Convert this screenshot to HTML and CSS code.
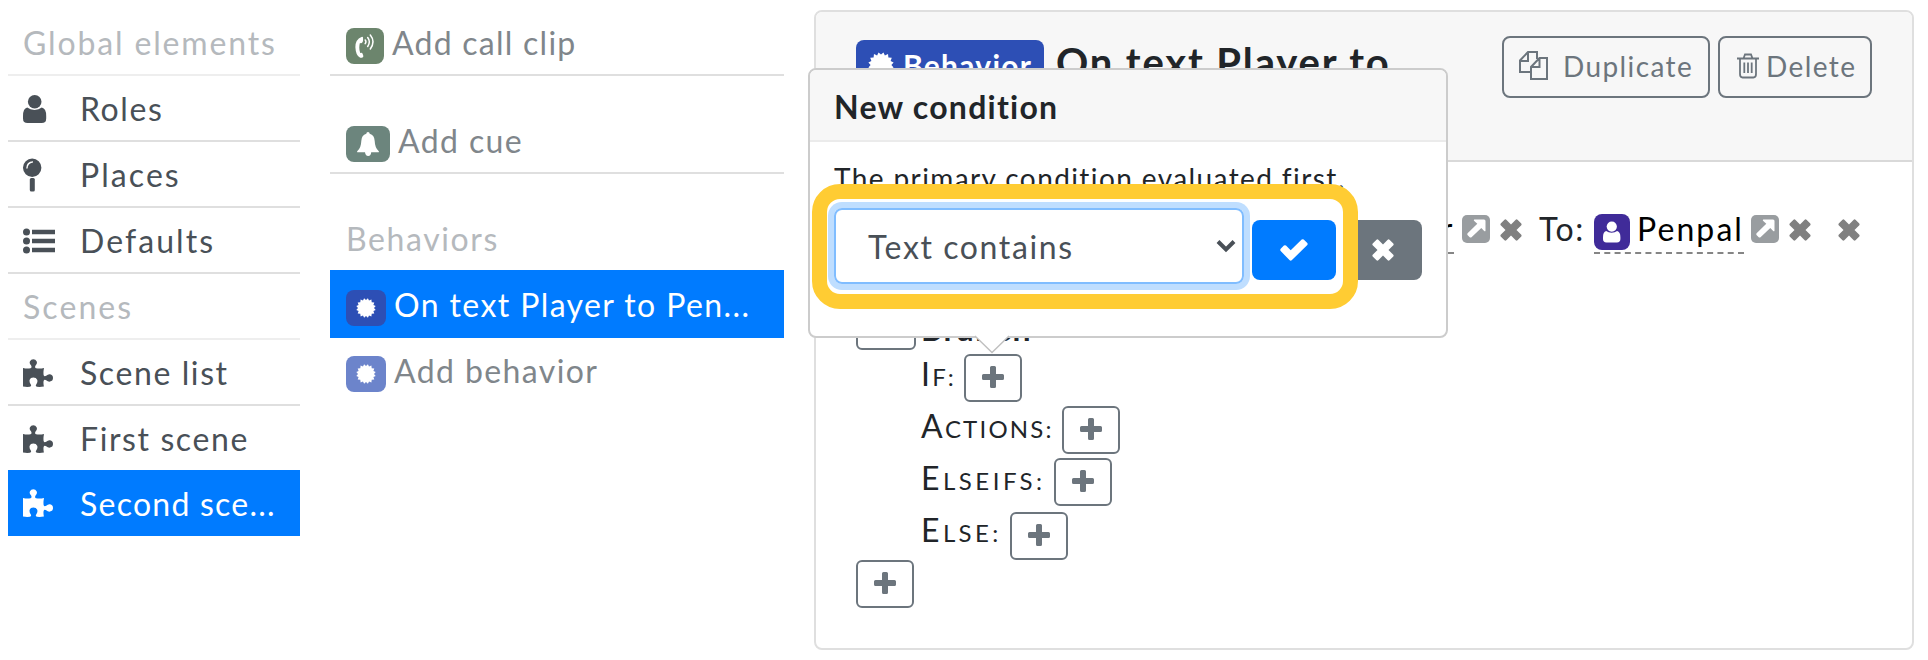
FILE: index.html
```html
<!DOCTYPE html>
<html lang="en">
<head>
<meta charset="utf-8">
<title>Scene editor</title>
<link rel="stylesheet" href="styles.css">
</head>
<body>
<svg class="defs" width="0" height="0" aria-hidden="true">
  <symbol id="user" viewBox="0 0 24 28"><circle cx="11.7" cy="6.8" r="6.8"/><path d="M4.2 12.6Q0 13.6 0 21v2.4Q0 28 4.6 28h14Q23.2 28 23.2 23.4V21q0-7.4-4.4-8.4-3 2.4-7.3 2.4t-7.3-2.4z"/></symbol>
  <symbol id="pin" viewBox="0 0 20 34"><path fill-rule="evenodd" d="M9.2.5a9.2 9.2 0 1 1 0 18.400a9.2 9.2 0 1 1 0-18.400zM3.200 10.400h1.400Q4.600 5.200 10 4.400V3.200Q3.200 3.600 3.200 10.400z"/><rect x="6.800" y="20" width="5" height="13.500" rx="1.500"/></symbol>
  <symbol id="list" viewBox="0 0 32 26"><circle cx="3.500" cy="4" r="3.500"/><circle cx="3.500" cy="13" r="3.500"/><circle cx="3.500" cy="22" r="3.500"/><path d="M9 1.800h23v4.400H9zM9 10.800h23v4.400H9zM9 19.800h23v4.400H9z"/></symbol>
  <symbol id="puzzle" viewBox="0 0 30 28"><path d="M0 9q4 1 7.500 .3Q9.300 8.600 8 6.200 6 4.500 7 2.300 8 .2 10.300 .2T13.600 2.300Q14.600 4.500 12.700 6.200 11.300 8.600 13 9.200q4 .8 8-.3-.8 4-.4 7 .6 2.200 2.600.9Q25 15 27 15.300q3 .6 3 3.800 0 3-3 3.500-2 .3-3.800-1.400-2-1.200-2.600.8-.4 2.400.3 5.600-4 .6-6.900.2-2-.6-.8-2.400Q15 23 14.200 20.800 13.300 18.600 10.300 18.500 7.400 18.600 6.700 20.800 6 23 7.800 25.400q1 1.800-1 2.400-3 .4-6.800-.2z"/></symbol>
  <symbol id="burst" viewBox="0 0 20 20"><path d="M10 2 11.900.3 13 2.600 15.400 1.600 15.700 4.200 18.300 4.500 17.400 6.900 19.700 8.100 18 10 19.700 11.900 17.400 13.100 18.300 15.500 15.700 15.800 15.400 18.400 13 17.400 11.900 19.700 10 18 8.100 19.700 7 17.400 4.600 18.400 4.300 15.800 1.700 15.500 2.600 13.100.3 11.900 2 10 .3 8.100 2.600 6.900 1.700 4.500 4.300 4.200 4.600 1.600 7 2.600 8.100.3z"/></symbol>
  <symbol id="call" viewBox="0 0 20 24"><path d="M8 3.300Q7.800 2.500 6.500 3 .2 5.500.4 13.500.8 22 5.200 23.700q1.500.4 2.600-.4.800-.7.400-1.800L7.500 19.400Q7 18.500 5.200 19 3.500 14 4.900 9q1.800.4 2.400-.4.700-1 .8-2.600z"/><g fill="none" stroke="currentColor" stroke-width="1.500" stroke-linecap="round"><path d="M10.200 6q1.400 1.600 0 3.600M12.700 3.500q3.300 4.200 0 9M15.300 1q5.400 6.600 0 14"/></g></symbol>
  <symbol id="bell" viewBox="0 0 22 24"><path d="M11 0q1.600 0 1.700 1.700Q17.500 3 17.700 9q.2 7 4.100 10.200.4.900-.5 1.100H14.200Q14 24 11.200 24T8 20.300H.7Q-.2 20.100.2 19.200 4.100 16 4.300 9 4.500 3 9.300 1.700 9.400 0 11 0z"/></symbol>
  <symbol id="plus" viewBox="0 0 22 22"><path d="M9.500 0h3Q14 0 14 1.500V8h6.500Q22 8 22 9.500v3Q22 14 20.500 14H14v6.500Q14 22 12.500 22h-3Q8 22 8 20.500V14H1.500Q0 14 0 12.500v-3Q0 8 1.500 8H8V1.500Q8 0 9.500 0z"/></symbol>
  <symbol id="times" viewBox="0 0 22 22"><path d="M4.500.700Q5.400 0 6.300.700L11 5.500 15.700.700Q16.600 0 17.500.700L21.300 4.500Q22 5.400 21.300 6.300L16.500 11 21.300 15.700Q22 16.600 21.300 17.500L17.500 21.300Q16.600 22 15.700 21.300L11 16.500 6.300 21.300Q5.400 22 4.500 21.300L.700 17.500Q0 16.600.700 15.700L5.500 11 .700 6.300Q0 5.400.700 4.500z"/></symbol>
  <symbol id="check" viewBox="0 0 28 22"><path d="M.700 9.800 3.900 6.600Q5 5.800 6 6.600L10.700 11.300 21.700.600Q22.700-.300 23.700.600L27.300 4.100Q28 5 27.300 6L11.700 21.300Q10.700 22 9.700 21.300L.700 12.100Q-.200 11 .700 9.800z"/></symbol>
  <symbol id="link" viewBox="0 0 28 28"><rect width="28" height="28" rx="5" fill="#999da0"/><path fill="#fff" d="M12.300 4.500H22Q23.500 4.500 23.500 6v9.700q-.3 1-1.300.3L19.300 13 9.500 22.300q-1 .6-1.800-.1L5.500 19.900q-.6-.8.100-1.700L15.300 8.700 12 5.800q-.6-1 .3-1.300z"/></symbol>
  <symbol id="copy" viewBox="0 0 30 30"><g fill="none" stroke="currentColor" stroke-width="2"><path d="M12 21H1V9.500L9 1h9v7M1 10h8V1M12 16v12h16V7H20.500zM12 16h8.500V7"/></g></symbol>
  <symbol id="trash" viewBox="0 0 22 26"><g fill="none" stroke="currentColor" stroke-width="1.800"><path d="M0 5.500h22M3 5.500V21Q3 24.500 5.500 24.500h11Q19 24.500 19 21V5.500M6.500 5.500 8 1.500h6l1.500 4M7.300 9.500v10.500M11 9.500v10.500M14.700 9.500v10.500"/></g></symbol>
  <symbol id="chevron" viewBox="0 0 20 14"><path d="M2 2.500 10 10.500 18 2.500" fill="none" stroke="currentColor" stroke-width="4"/></symbol>
</svg>
<div class="app">
  <nav class="sidebar">
    <div class="row heading"><span class="t roomy">Global elements</span></div>
    <div class="row"><span class="icon"><svg width="24" height="28"><use href="#user"/></svg></span><span class="t">Roles</span></div>
    <div class="row"><span class="icon"><svg width="20" height="34"><use href="#pin"/></svg></span><span class="t wide">Places</span></div>
    <div class="row"><span class="icon"><svg width="32" height="26"><use href="#list"/></svg></span><span class="t wide">Defaults</span></div>
    <div class="row heading"><span class="t wide">Scenes</span></div>
    <div class="row"><span class="icon"><svg width="30" height="28"><use href="#puzzle"/></svg></span><span class="t">Scene list</span></div>
    <div class="row last"><span class="icon"><svg width="30" height="28"><use href="#puzzle"/></svg></span><span class="t">First scene</span></div>
    <div class="row active"><span class="icon"><svg width="30" height="28"><use href="#puzzle"/></svg></span><span class="t tight">Second sce...</span></div>
  </nav>

  <div class="outline">
    <div class="item"><span class="badge call"><svg width="20" height="24"><use href="#call"/></svg></span><span class="t tight">Add call clip</span></div>
    <div class="item cue-item"><span class="badge cue"><svg width="22" height="24"><use href="#bell"/></svg></span><span class="t snug">Add cue</span></div>
    <div class="item group"><span class="t">Behaviors</span></div>
    <div class="item selected"><span class="badge behavior"><svg width="20" height="20"><use href="#burst"/></svg></span><span class="t snug">On text Player to Pen...</span></div>
    <div class="item plain"><span class="badge behavior faded"><svg width="20" height="20"><use href="#burst"/></svg></span><span class="t snug">Add behavior</span></div>
  </div>

  <main class="card">
    <header class="card-header">
      <span class="type"><svg width="26" height="26"><use href="#burst"/></svg><span class="t tight">Behavior</span></span>
      <h1 class="title"><span class="t roomy">On text Player to</span></h1>
      <div class="tools">
        <button class="tool"><svg width="30" height="30"><use href="#copy"/></svg><span class="t snug">Duplicate</span></button>
        <button class="tool delete"><svg width="22" height="26"><use href="#trash"/></svg><span class="t snug">Delete</span></button>
      </div>
    </header>
    <section class="card-body">
      <div class="trigger">
        <span class="ref from"><span class="t">Player</span></span>
        <svg class="go" width="28" height="28"><use href="#link"/></svg>
        <svg class="x" width="22" height="22"><use href="#times"/></svg>
        <span class="to"><span class="t">To:</span></span>
        <span class="ref penpal"><span class="badge role"><svg width="18" height="22"><use href="#user"/></svg></span><span class="t wide">Penpal</span></span>
        <svg class="go near" width="28" height="28"><use href="#link"/></svg>
        <svg class="x" width="22" height="22"><use href="#times"/></svg>
        <svg class="x far" width="22" height="22"><use href="#times"/></svg>
      </div>
      <div class="branch"><button class="add gear"><svg width="24" height="24" viewBox="0 0 24 24"><circle cx="12" cy="12" r="9.500" fill="none" stroke="currentColor" stroke-width="4"/></svg></button><b class="t roomy">Branch</b></div>
      <div class="clause"><span class="label">If:</span><button class="add"><svg width="22" height="22"><use href="#plus"/></svg></button></div>
      <div class="clause"><span class="label">Actions:</span><button class="add"><svg width="22" height="22"><use href="#plus"/></svg></button></div>
      <div class="clause elseifs"><span class="label">Elseifs:</span><button class="add"><svg width="22" height="22"><use href="#plus"/></svg></button></div>
      <div class="clause else"><span class="label">Else:</span><button class="add"><svg width="22" height="22"><use href="#plus"/></svg></button></div>
      <button class="add root"><svg width="22" height="22"><use href="#plus"/></svg></button>
    </section>
  </main>
</div>

<div class="popover">
  <div class="popover-head"><span class="t tight">New condition</span></div>
  <div class="popover-body">
    <p class="hint"><span class="t snug">The primary condition evaluated first.</span></p>
    <div class="form">
      <div class="select"><span class="t">Text contains</span><svg width="20" height="14"><use href="#chevron"/></svg></div>
      <button class="ok"><svg width="28" height="22"><use href="#check"/></svg></button>
      <button class="cancel"><svg width="22" height="22"><use href="#times"/></svg></button>
    </div>
  </div>
  <svg class="arrow" width="34" height="18" viewBox="0 0 34 18"><path d="M0 0 17 16.500 34 0z" fill="#fff"/><path d="M0 0 17 16.500 34 0" fill="none" stroke="#bfbfbf" stroke-width="1.400"/></svg>
</div>
<div class="highlight"></div>
</body>
</html>
```

FILE: styles.css
```css
* { box-sizing: border-box; }
body { margin: 0; width: 1928px; height: 660px; overflow: hidden; position: relative; background: #fff; color: #212529; font: 32px/48px Lato, sans-serif; }
svg { fill: currentColor; flex: none; display: block; overflow: visible; }
.defs { position: absolute; }
button { font: inherit; margin: 0; padding: 0; background: none; }
.t { white-space: nowrap; letter-spacing: 1.6px; }
.t.tight { letter-spacing: 1.250px; }
.t.snug { letter-spacing: 1.400px; }
.t.roomy { letter-spacing: 1.850px; }
.t.wide { letter-spacing: 2.080px; }
.app { display: flex; padding: 10px 14px 0 8px; }

.sidebar { width: 292px; color: #495057; }
.row { height: 66px; padding: 2px 0 0 15px; display: flex; align-items: center; border-bottom: 2px solid #dfdfdf; }
.row .icon { width: 57px; display: flex; align-items: center; }
.row.heading { color: #b5b9bd; border-color: #eee; }
.row.last { height: 64px; border: 0; }
.row.active { background: #007bff; color: #fff; border-color: #007bff; }
.active .t { padding-top: 2px; }

.outline { width: 454px; margin-left: 30px; color: #80868b; }
.item { height: 66px; padding: 2px 0 0 16px; display: flex; align-items: center; border-bottom: 2px solid #dfdfdf; }
.badge { display: flex; align-items: center; justify-content: center; height: 36px; width: 40px; border-radius: 8px; color: #fff; margin: 6px 8px 0 0; }
.badge.call { width: 38px; background: #6c856d; }
.badge.cue { width: 44px; background: #6c857d; }
.badge.behavior { background: #2d4fb5; }
.badge.faded { background: #6c84cb; }
.item.cue-item { height: 98px; padding-top: 34px; }
.item.group { height: 96px; padding-top: 33px; color: #b5b9bd; border: 0; }
.item.selected { height: 68px; padding-top: 4px; color: #fff; background: #007bff; border-color: #007bff; }
.item.plain { padding-top: 0; border: 0; }

.card { width: 1100px; height: 640px; margin-left: 30px; border: 2px solid #dfdfdf; border-radius: 8px; overflow: hidden; }
.card-header { height: 150px; display: flex; align-items: flex-start; background: #f7f7f7; border-bottom: 2px solid #d9d9d9; padding: 24px 40px 0; }
.type { margin-top: 4px; width: 188px; height: 52px; padding: 0 0 2px 12px; display: flex; align-items: center; gap: 9px; border-radius: 8px; background: #2d4fb5; color: #fff; font-weight: 700; font-size: 30px; }
.title { margin: 2px 0 0 12px; font-size: 40px; line-height: 48px; font-weight: 700; }
.tools { display: flex; gap: 8px; margin-left: auto; }
.tool { height: 62px; width: 208px; display: flex; align-items: center; padding: 0 0 2px 15px; gap: 14px; border: 2px solid #6c757d; border-radius: 8px; color: #6c757d; font-size: 28px; }
.tool.delete { width: 154px; padding-left: 17px; gap: 7px; }
.card-body { padding: 52px 40px 0; }
.trigger { display: flex; align-items: flex-start; height: 88px; padding-right: 12px; }
.ref { height: 40px; line-height: 30px; color: #000; border-bottom: 2px dashed #858585; display: flex; }
.from { margin-left: auto; }
.penpal { width: 150px; }
.go { margin: 1px 0 0 8px; }
.go.near { margin-left: 7px; }
.x { margin: 5px 0 0 10px; color: #808080; }
.x.far { margin-left: 27px; }
.to { margin-left: 17px; line-height: 30px; width: 55px; }
.badge.role { width: 36px; margin: 0 7px 0 0; background: #402b99; }
.branch { display: flex; height: 52px; line-height: 54px; gap: 5px; }
.add { width: 58px; height: 48px; display: flex; justify-content: center; padding-top: 10px; border: 2px solid #6c757d; border-radius: 6px; color: #6c757d; }
.gear { width: 60px; }
.clause { height: 52px; padding-left: 65px; display: flex; gap: 8px; line-height: 40px; }
.label { font-size: 24px; text-transform: uppercase; letter-spacing: 2.200px; }
.label::first-letter { font-size: 32px; }
.elseifs .label { letter-spacing: 3.500px; }
.clause.else { height: 50px; }
.else .label { letter-spacing: 3.400px; }
.else .add { margin-top: 2px; }

.popover { position: absolute; left: 808px; top: 68px; width: 640px; height: 270px; background: #fff; border: 2px solid #ccc; border-radius: 8px; }
.popover-head { height: 72px; line-height: 73px; padding-left: 24px; background: #f7f7f7; border-bottom: 2px solid #ebebeb; border-radius: 6px 6px 0 0; font-weight: 700; }
.popover-body { padding: 12px 24px 0; }
.hint { margin: 0; height: 54px; line-height: 48px; font-size: 28px; }
.form { display: flex; align-items: flex-start; }
.select { width: 410px; height: 76px; padding: 0 6px 0 32px; display: flex; align-items: center; justify-content: space-between; border: 2px solid #80bdff; border-radius: 8px; box-shadow: 0 0 0 6px #bfdeff; color: #495057; }
.select .t { padding-top: 2px; }
.ok, .cancel { width: 84px; height: 60px; margin: 12px 0 0 8px; display: flex; align-items: center; justify-content: center; border: 0; border-radius: 8px; color: #fff; background: #007bff; }
.cancel { width: 78px; background: #6c757d; }
.arrow { position: absolute; left: 165px; top: 266px; }
.highlight { position: absolute; left: 812px; top: 184px; width: 546px; height: 125px; border: 15px solid #ffcc33; border-radius: 28px; }
```
